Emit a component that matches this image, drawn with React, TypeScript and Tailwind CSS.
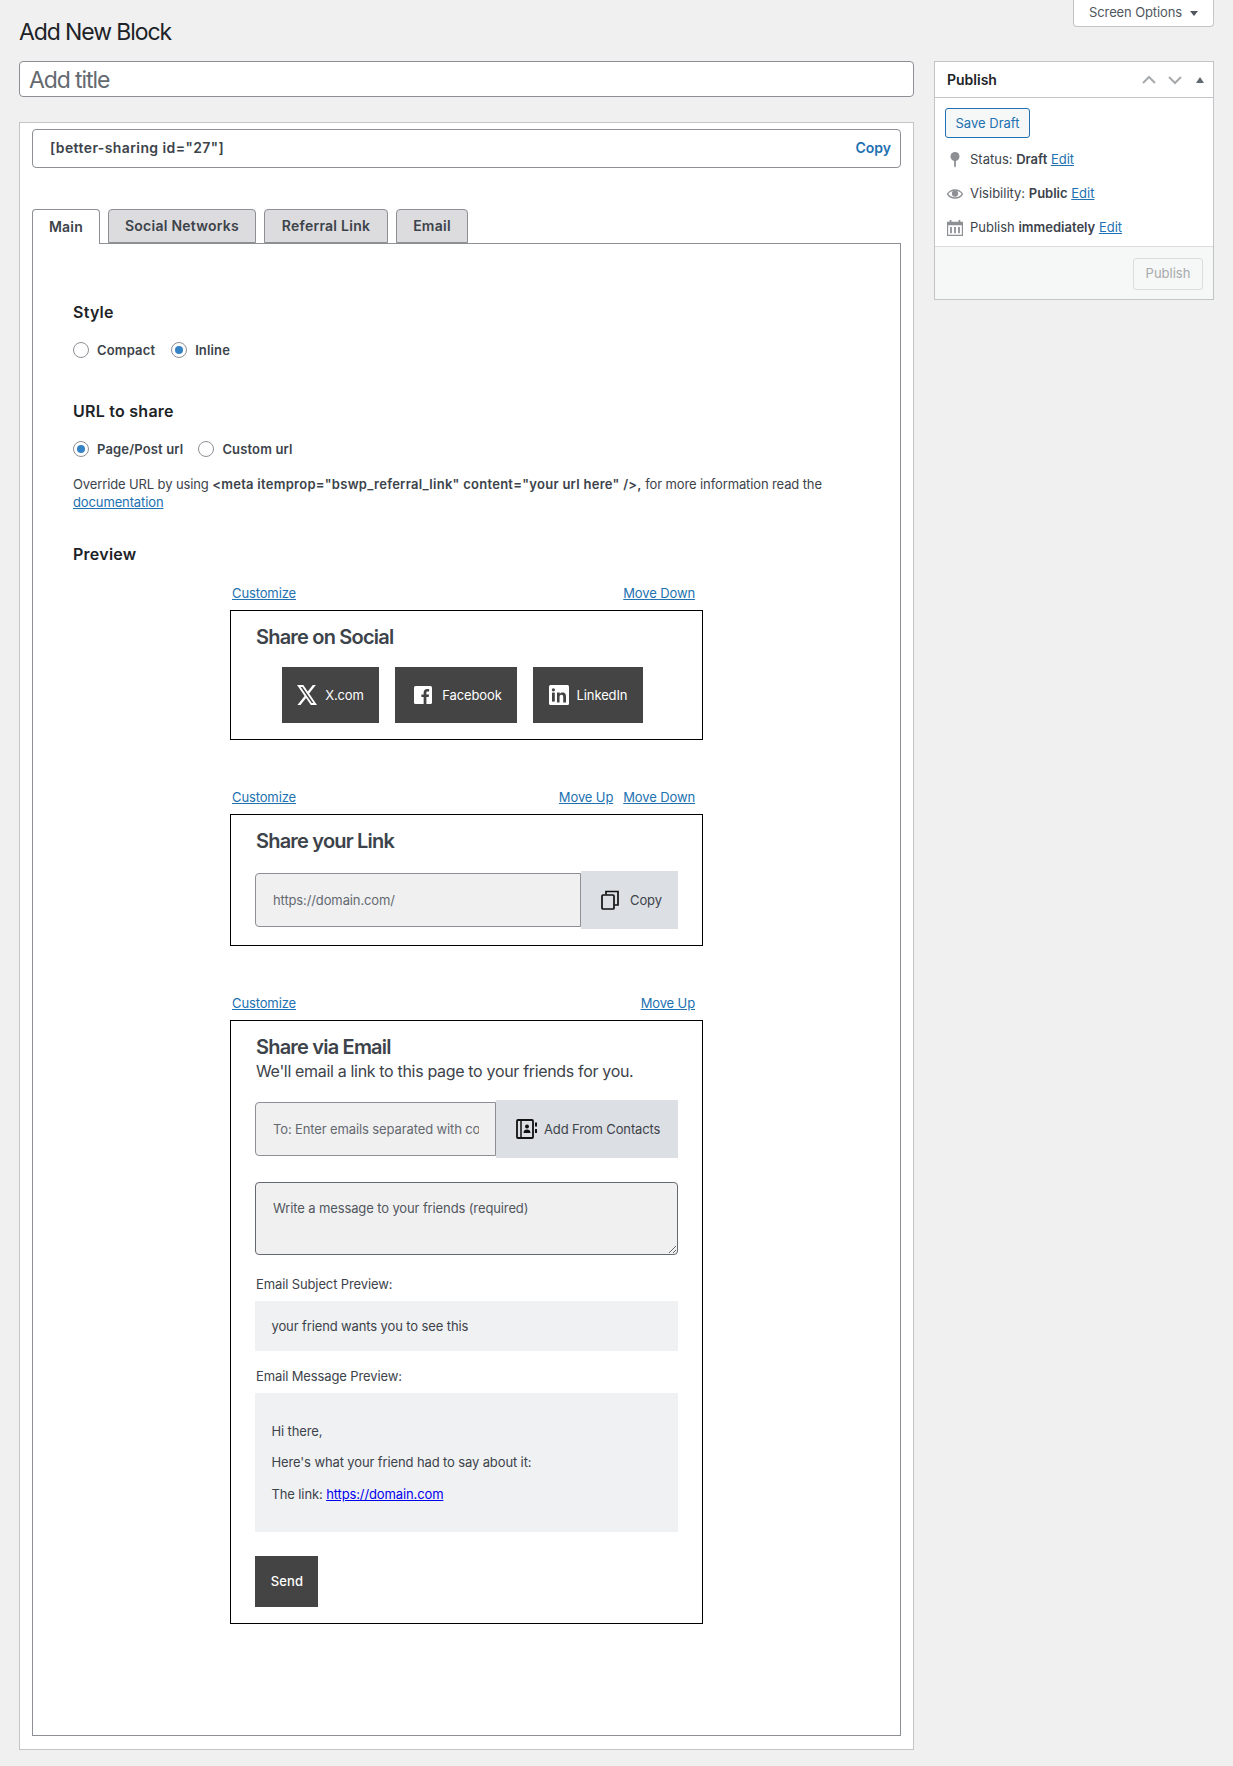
import React from 'react';

const font = "font-['Inter','Liberation_Sans',sans-serif]";
const link = 'text-[#2271b1] underline';

const XLogo = () => (
  <svg className="w-5 h-5" viewBox="1.2 2.2 21.6 19.6" preserveAspectRatio="none" fill="#fff">
    <path d="M18.244 2.25h3.308l-7.227 8.26 8.502 11.24H16.17l-5.214-6.817L4.99 21.75H1.68l7.73-8.835L1.254 2.25H8.08l4.713 6.231zm-1.161 17.52h1.833L7.084 4.126H5.117z" />
  </svg>
);

const FacebookLogo = () => (
  <svg className="w-[18px] h-[18px]" viewBox="0 0 18 18">
    <rect width="18" height="18" rx="1.5" fill="#fff" />
    <path d="M12.4 18v-6.9h2.3l.35-2.7H12.4V6.7c0-.8.22-1.3 1.35-1.3h1.4V3c-.25 0-1.1-.1-2.05-.1-2.05 0-3.45 1.25-3.45 3.5v2H7.4v2.7h2.25V18z" fill="#444" />
  </svg>
);

const LinkedinLogo = () => (
  <svg className="w-5 h-5" viewBox="0 0 20 20">
    <rect width="20" height="20" rx="1.5" fill="#fff" />
    <rect x="3" y="7.6" width="2.8" height="9" fill="#444" />
    <circle cx="4.4" cy="4.8" r="1.6" fill="#444" />
    <path d="M8 7.6h2.7v1.25c.4-.75 1.35-1.45 2.8-1.45 2.9 0 3.5 1.9 3.5 4.4v5.8h-2.8v-5.1c0-1.2-.05-2.75-1.7-2.75-1.7 0-1.95 1.3-1.95 2.65v5.2H8z" fill="#444" />
  </svg>
);

const CopyIcon = () => (
  <svg className="w-[18px] h-5" viewBox="0 0 18 20" fill="none" stroke="#111" strokeWidth="1.7">
    <rect x="1" y="5" width="12" height="14" rx="1" />
    <path d="M5 4.5V1.5h12V15h-3.5" />
  </svg>
);

const ContactsIcon = () => (
  <svg className="w-[21px] h-5" viewBox="0 0 21 20">
    <rect x="1" y="1" width="16" height="18" rx="1" fill="none" stroke="#111" strokeWidth="1.8" />
    <path d="M5 1v18" stroke="#111" strokeWidth="1.5" />
    <circle cx="11" cy="7.5" r="2" fill="#111" />
    <path d="M7.5 14c0-2.5 1.5-3.6 3.5-3.6s3.5 1.1 3.5 3.6z" fill="#111" />
    <rect x="19" y="3.5" width="2" height="4" fill="#111" />
    <rect x="19" y="10" width="2" height="4" fill="#111" />
  </svg>
);

const PinIcon = () => (
  <svg className="w-5 h-5" viewBox="0 0 20 20" fill="#8c8f94">
    <circle cx="10" cy="6.500" r="4.500" />
    <path d="M9.100 9h1.800v7l-.9 1.800-.9-1.800z" />
  </svg>
);

const EyeIcon = () => (
  <svg className="w-[18px] h-[18px]" viewBox="0 0 20 20">
    <path d="M.8 10C3 6.300 6.200 4.600 10 4.600s7 1.700 9.200 5.400c-2.200 3.700-5.400 5.400-9.200 5.400S3 13.700.8 10z" fill="#8c8f94" />
    <path d="M2.600 10C4.500 7.500 7 6.300 10 6.300s5.500 1.200 7.400 3.700c-1.900 2.500-4.400 3.700-7.400 3.700S4.500 12.500 2.600 10z" fill="#fff" />
    <circle cx="10" cy="9.500" r="3.500" fill="#8c8f94" />
  </svg>
);

const CalendarIcon = () => (
  <svg className="w-4 h-4" viewBox="0 0 18 18" fill="#8c8f94">
    <path d="M3 0h2v2h8V0h2v2h3v16H0V2h3zM1.300 6v10.700h15.400V6z" />
    <path d="M3.500 8h2v7h-2zM8 8h2v7H8zM12.500 8h2v7h-2z" />
  </svg>
);

const Chevron = ({ up }: { up?: boolean }) => (
  <svg className="w-[14px] h-[10px]" viewBox="0 0 14 10" fill="none" stroke="#a7aaad" strokeWidth="2">
    <path d={up ? 'M1 8l6-6 6 6' : 'M1 2l6 6 6-6'} />
  </svg>
);

const Radio = ({ checked, label, className }: { checked?: boolean; label: string; className?: string }) => (
  <label className={`flex items-center gap-2 ${className || ''}`}>
    <span className="w-4 h-4 rounded-full border border-[#8c8f94] bg-white flex items-center justify-center">
      {checked && <span className="w-2 h-2 rounded-full bg-[#3582c4]"></span>}
    </span>
    <span className="text-[13px] leading-5 font-semibold tracking-[0.15px] text-[#3c434a]">{label}</span>
  </label>
);

const BlockActions = ({ up, down }: { up?: boolean; down?: boolean }) => (
  <div className="flex justify-between pl-[2px] pr-[8px] text-[13px] leading-[18px]">
    <a className={link}>Customize</a>
    <div className="flex gap-[10px]">
      {up && <a className={link}>Move Up</a>}
      {down && <a className={link}>Move Down</a>}
    </div>
  </div>
);

const Heading = ({ children }: { children: React.ReactNode }) => (
  <h3 className="ml-px text-[20px] leading-6 font-semibold text-[#3c434a] tracking-[-0.8px]">{children}</h3>
);

const SocialButton = ({ width, gap, icon, label }: { width: string; gap: string; icon: React.ReactNode; label: string }) => (
  <div className={`${width} ${gap} h-14 bg-[#444] flex items-center justify-center text-white text-[13px]`}>
    {icon}
    <span className="pt-[2px]">{label}</span>
  </div>
);

const MetaRow = ({ icon, children }: { icon: React.ReactNode; children: React.ReactNode }) => (
  <div className="flex items-center h-[34px] text-[13px] text-[#3c434a]">
    <span className="w-[25px] flex justify-center shrink-0 -ml-[3px] mr-[3px]">{icon}</span>
    <span>{children}</span>
  </div>
);

const tabs = [
  { label: 'Social Networks', width: 'w-[148px]' },
  { label: 'Referral Link', width: 'w-[124px]' },
  { label: 'Email', width: 'w-[72px]' },
];

const App: React.FC = () => {
  return (
    <div className={`${font} min-h-[1766px] bg-[#f0f0f1] pl-[19px] pr-[19px] text-[#3c434a] tracking-[-0.12px]`}>
      <div className="flex justify-between h-[61px]">
        <h1 className="text-[23px] leading-[30px] mt-[17px] text-[#1d2327] tracking-[-1.1px]">Add New Block</h1>
        <div className="w-[141px] h-[27px] bg-white border border-t-0 border-[#c3c4c7] rounded-b flex items-center justify-center gap-2 text-[13px] text-[#50575e]">
          Screen Options
          <span className="w-0 h-0 border-x-[4px] border-x-transparent border-t-[5px] border-t-[#50575e]"></span>
        </div>
      </div>

      <div className="flex gap-5 items-start">
        <div className="w-[895px] shrink-0">
          <input
            readOnly
            placeholder="Add title"
            className="w-full h-9 bg-white border border-[#8c8f94] rounded px-[9px] pt-[2px] text-[23px] tracking-[-1.1px] placeholder:text-[#646970] outline-none"
          />

          <div className="mt-[25px] bg-white border border-[#c3c4c7] pt-[6px] pl-3 pr-3 pb-[13px]">
            <div className="h-[39px] border border-[#8c8f94] rounded flex items-center justify-between pl-[17px] pr-[9px] pb-[2px] text-[14px] font-semibold">
              <span className="tracking-[0.4px]">[better-sharing id="27"]</span>
              <a className="text-[#2271b1] tracking-normal">Copy</a>
            </div>

            <div className="flex gap-2 mt-[41px] h-[35px] relative z-10 -mb-px">
              <div className="w-[68px] h-[35px] pb-[2px] bg-white border border-b-0 border-[#8c8f94] rounded-t flex items-center justify-center text-[14px] font-semibold tracking-[0.2px]">
                Main
              </div>
              {tabs.map((tab) => (
                <div
                  key={tab.label}
                  className={`${tab.width} h-[34px] pb-[1px] bg-[#dcdcde] border border-[#8c8f94] rounded-t flex items-center justify-center text-[14px] font-semibold tracking-[0.25px]`}
                >
                  {tab.label}
                </div>
              ))}
            </div>

            <div className="border border-[#8c8f94] pt-[58px] pl-10 pr-10 pb-[111px]">
              <h2 className="text-[16px] leading-5 font-semibold tracking-[0.25px] text-[#1d2327]">Style</h2>
              <div className="flex mt-[18px] h-5">
                <Radio label="Compact" />
                <Radio label="Inline" checked className="ml-4" />
              </div>

              <h2 className="mt-[41px] text-[16px] leading-5 font-semibold tracking-[0.25px] text-[#1d2327]">URL to share</h2>
              <div className="flex mt-[18px] h-5">
                <Radio label="Page/Post url" checked />
                <Radio label="Custom url" className="ml-[15px]" />
              </div>
              <p className="mt-4 text-[13px] leading-[18px]">
                Override URL by using <b className="font-semibold tracking-[0.27px]">&lt;meta itemprop="bswp_referral_link" content="your url here" /&gt;,</b> for more information read the{' '}
                <a className={link}>documentation</a>
              </p>

              <h2 className="mt-[33px] text-[16px] leading-5 font-semibold tracking-[0.25px] text-[#1d2327]">Preview</h2>

              <div className="ml-[157px] w-[473px]">
                <div className="mt-5">
                  <BlockActions down />
                </div>
                <div className="mt-2 border border-black pt-[14px] pl-6 pb-4">
                  <Heading>Share on Social</Heading>
                  <div className="flex gap-4 mt-[18px] ml-[27px]">
                    <SocialButton width="w-[97px]" gap="gap-2" icon={<XLogo />} label="X.com" />
                    <SocialButton width="w-[122px] pl-1" gap="gap-[10px]" icon={<FacebookLogo />} label="Facebook" />
                    <SocialButton width="w-[110px]" gap="gap-2" icon={<LinkedinLogo />} label="LinkedIn" />
                  </div>
                </div>

                <div className="mt-12">
                  <BlockActions up down />
                </div>
                <div className="mt-2 border border-black pt-[14px] px-6 pb-4">
                  <Heading>Share your Link</Heading>
                  <div className="flex items-center mt-[18px] h-[58px]">
                    <input
                      readOnly
                      placeholder="https://domain.com/"
                      className="w-[326px] h-[54px] bg-[#f0f0f1] border border-[#8c8f94] rounded-l rounded-r-none pl-[17px] text-[13px] tracking-[-0.12px] placeholder:text-[#646970] outline-none"
                    />
                    <div className="w-[97px] h-[58px] bg-[#dcdfe4] flex items-center pl-5 gap-[11px] text-[13px]">
                      <CopyIcon />
                      <span className="pt-[2px]">Copy</span>
                    </div>
                  </div>
                </div>

                <div className="mt-12">
                  <BlockActions up />
                </div>
                <div className="mt-2 border border-black pt-[14px] px-6 pb-4">
                  <Heading>Share via Email</Heading>
                  <p className="ml-px text-[16px] leading-6 tracking-[-0.33px]">We'll email a link to this page to your friends for you.</p>
                  <div className="flex items-center mt-[17px] h-[58px]">
                    <input
                      readOnly
                      placeholder="To: Enter emails separated with commas"
                      className="w-[241px] h-[54px] bg-[#f0f0f1] border border-[#8c8f94] rounded-l rounded-r-none pl-[17px] pr-4 text-[13px] tracking-[-0.12px] placeholder:text-[#646970] outline-none"
                    />
                    <div className="w-[182px] h-[58px] bg-[#dcdfe4] flex items-center pl-5 gap-[7px] text-[13px]">
                      <ContactsIcon />
                      <span className="pt-px">Add From Contacts</span>
                    </div>
                  </div>
                  <textarea
                    readOnly
                    placeholder="Write a message to your friends (required)"
                    className="block mt-6 w-[423px] h-[73px] bg-[#f0f0f1] border border-[#646970] rounded pl-[17px] pt-4 text-[13px] leading-[18px] tracking-[-0.12px] placeholder:text-[#50575e] outline-none"
                  />
                  <div className="mt-5 ml-px text-[13px] leading-[18px]">Email Subject Preview:</div>
                  <div className="mt-2 h-[50px] bg-[#f0f1f3] pl-[16.5px] pt-[2px] flex items-center text-[13px]">your friend wants you to see this</div>
                  <div className="mt-4 ml-px text-[13px] leading-[18px]">Email Message Preview:</div>
                  <div className="mt-2 bg-[#f0f1f3] pl-[16.5px] py-7 text-[13px] leading-5">
                    <p>Hi there,</p>
                    <p className="mt-[11px]">Here's what your friend had to say about it:</p>
                    <p className="mt-3">
                      The link: <a className="text-[#0000ee] underline">https://domain.com</a>
                    </p>
                  </div>
                  <div className="mt-6 w-[63px] h-[51px] bg-[#444] text-white text-[13px] font-medium tracking-[0.1px] pl-px flex items-center justify-center">Send</div>
                </div>
              </div>
            </div>
          </div>
        </div>

        <aside className="w-[280px] shrink-0 bg-white border border-[#c3c4c7] tracking-normal">
          <div className="h-9 border-b border-[#c3c4c7] flex items-center pl-3 pr-[9px]">
            <h2 className="flex-1 text-[14px] font-semibold text-[#1d2327]">Publish</h2>
            <div className="flex items-center gap-[12px]">
              <Chevron up />
              <Chevron />
              <span className="ml-[2px] w-0 h-0 border-x-[4px] border-x-transparent border-b-[6px] border-b-[#646970]"></span>
            </div>
          </div>
          <div className="pl-[10px] pr-[10px] pt-[10px]">
            <div className="w-[85px] h-[30px] pt-px bg-[#f6f7f7] border border-[#2271b1] rounded-[3px] text-[#2271b1] text-[13px] flex items-center justify-center">Save Draft</div>
            <div className="mt-[5px]">
              <MetaRow icon={<PinIcon />}>
                Status: <b className="font-semibold">Draft</b> <a className={link}>Edit</a>
              </MetaRow>
              <MetaRow icon={<EyeIcon />}>
                Visibility: <b className="font-semibold">Public</b> <a className={link}>Edit</a>
              </MetaRow>
              <MetaRow icon={<CalendarIcon />}>
                Publish <b className="font-semibold">immediately</b> <a className={link}>Edit</a>
              </MetaRow>
            </div>
          </div>
          <div className="h-[53px] mt-[1px] pt-[2px] bg-[#f6f7f7] border-t border-[#dcdcde] flex justify-end items-center pr-[10px]">
            <div className="w-[70px] h-8 bg-[#f6f7f7] border border-[#dcdcde] rounded-[3px] text-[#a7aaad] text-[13px] flex items-center justify-center">Publish</div>
          </div>
        </aside>
      </div>
    </div>
  );
};

export default App;
